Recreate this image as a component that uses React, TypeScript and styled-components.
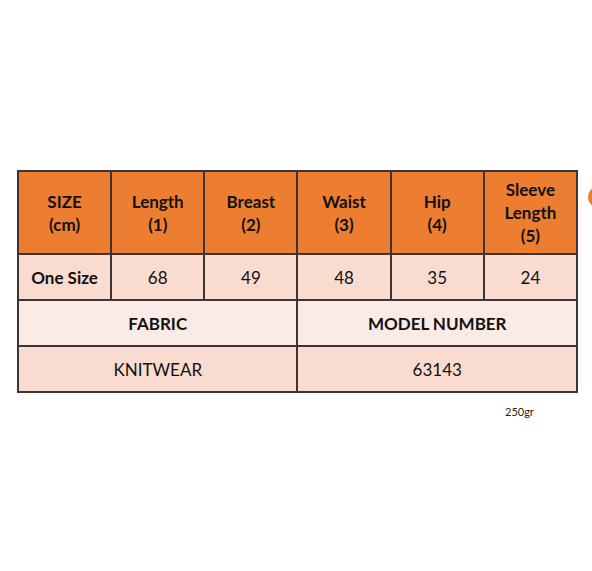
import styled, { createGlobalStyle } from 'styled-components';

const GlobalStyle = createGlobalStyle`
  html, body {
    margin: 0;
    padding: 0;
    background: #ffffff;
  }
  body {
    font-family: Lato, 'Open Sans', sans-serif;
    color: #111;
  }
`;

const headers = [
  ['SIZE', '(cm)'],
  ['Length', '(1)'],
  ['Breast', '(2)'],
  ['Waist', '(3)'],
  ['Hip', '(4)'],
  ['Sleeve', 'Length', '(5)'],
];

const values = ['68', '49', '48', '35', '24'];

export default function App() {
  return (
    <>
      <GlobalStyle />
      <Page>
        <Chart>
          <colgroup>
            {headers.map((_, i) => (
              <col key={i} style={{ width: `${100 / 6}%` }} />
            ))}
          </colgroup>
          <tbody>
            <HeadRow>
              {headers.map((lines, i) => (
                <HeadCell key={i}>
                  {lines.map((l, j) => (
                    <div key={j}>{l}</div>
                  ))}
                </HeadCell>
              ))}
            </HeadRow>
            <Row tone='mid'>
              <Cell bold>One Size</Cell>
              {values.map((v) => (
                <Cell key={v}>{v}</Cell>
              ))}
            </Row>
            <Row tone='light'>
              <Cell bold colSpan={3}>
                FABRIC
              </Cell>
              <Cell bold colSpan={3}>
                MODEL NUMBER
              </Cell>
            </Row>
            <Row tone='mid'>
              <Cell colSpan={3}>KNITWEAR</Cell>
              <Cell colSpan={3}>63143</Cell>
            </Row>
          </tbody>
        </Chart>
        <Weight>250gr</Weight>
        <Dot />
      </Page>
    </>
  );
}

const Page = styled.div`
  position: relative;
  width: 592px;
  height: 571px;
  padding: 170px 0 0 17px;
  box-sizing: border-box;
  overflow: hidden;
`;

const Chart = styled.table`
  width: 561px;
  table-layout: fixed;
  border-collapse: collapse;
  border: 2px solid #3d3535;
`;

const HeadRow = styled.tr`
  height: 83px;
  background: #ed7d31;
`;

const HeadCell = styled.td`
  border: 2px solid #3d3535;
  text-align: center;
  vertical-align: middle;
  font-weight: 700;
  font-size: 17px;
  line-height: 23px;
  color: #111;
  padding: 0;
`;

const Row = styled.tr<{ tone: 'mid' | 'light' }>`
  height: 46px;
  background: ${(props) => (props.tone === 'mid' ? '#f9dbd0' : '#fbebe6')};
`;

const Cell = styled.td<{ bold?: boolean }>`
  border: 2px solid #3d3535;
  text-align: center;
  vertical-align: middle;
  font-size: 17px;
  font-weight: ${(props) => (props.bold ? 700 : 400)};
  color: #111;
  padding: 0;
`;

const Weight = styled.div`
  margin: 12px 0 0 488px;
  font-size: 11px;
  color: #222;
`;

const Dot = styled.div`
  position: absolute;
  left: 588px;
  top: 187px;
  width: 18px;
  height: 20px;
  border-radius: 50%;
  background: #ed7d31;
`;
